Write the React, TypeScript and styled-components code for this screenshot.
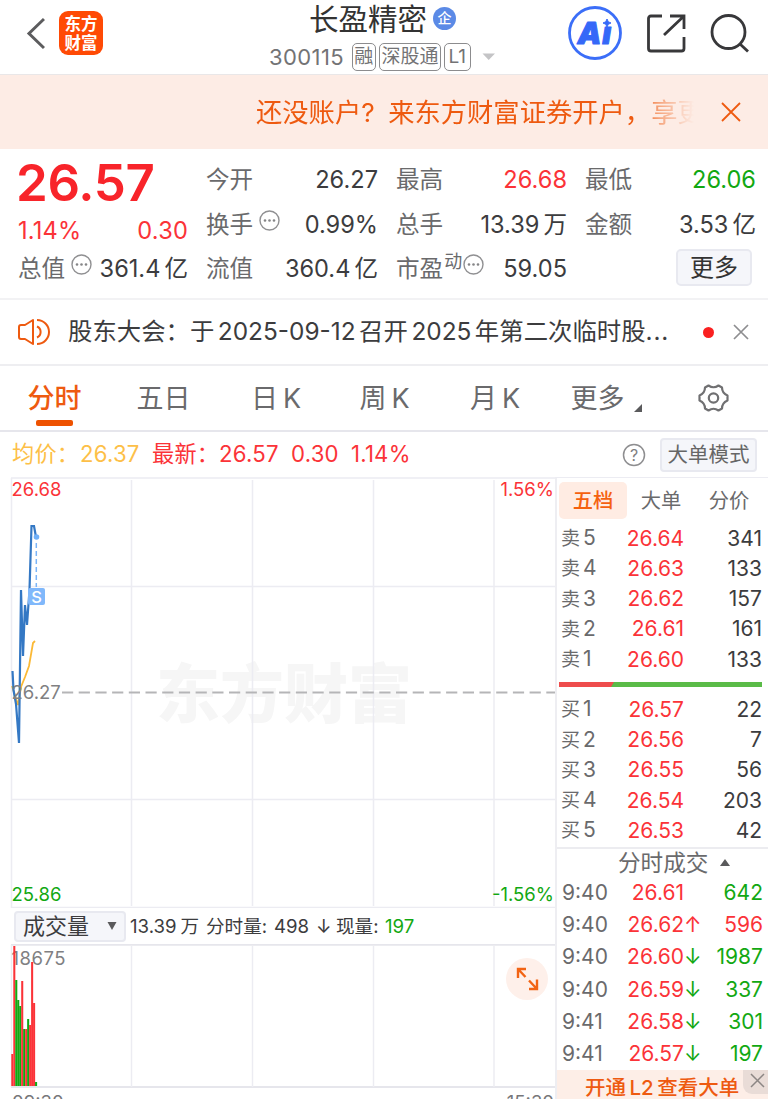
import React from 'react';
import styled, { createGlobalStyle, css } from 'styled-components';

const RED = '#fb3338';
const GREEN = '#12a812';
const ORANGE = '#ee5a10';
const LINE = '#ececf2';
const INK = '#3c3c3e';
const MUTED = '#6a6a6c';
const FONT = `Inter, 'Noto Sans CJK SC', sans-serif`;

const Global = createGlobalStyle`
  * { box-sizing: border-box; }
  html, body { margin: 0; padding: 0; background: #fff; }
  body { font-family: ${FONT}; color: ${INK}; line-height: 1.2; overflow: hidden; text-autospace: no-autospace; }
  svg { display: block; flex: none; }
`;

type Tone = 'red' | 'green' | 'ink';
const tones: Record<Tone, string> = { red: RED, green: GREEN, ink: INK };

const Screen = styled.div`
  width: 768px;
  height: 1099px;
  overflow: hidden;
  display: flex;
  flex-direction: column;
  white-space: nowrap;
  & > * { flex-shrink: 0; }
`;

const Thin = styled.span`
  margin: 0 0 0 4px;
`;

/* ---------- header ---------- */
const Header = styled.header`
  height: 75px;
  display: grid;
  grid-template-columns: 252px 264px 252px;
  border-bottom: 1px solid #e9e7e8;
`;
const HeaderLeft = styled.div`
  display: flex;
  padding: 11px 0 0 26px;
  gap: 14px;
`;
const Logo = styled.div`
  width: 44px;
  height: 44px;
  border-radius: 9px;
  background: #ff4a05;
  color: #fff;
  font-size: 16.5px;
  font-weight: 700;
  line-height: 18.5px;
  text-align: center;
  padding-top: 4px;
`;
const HeaderMid = styled.div`
  display: flex;
  flex-direction: column;
`;
const TitleRow = styled.div`
  display: flex;
  align-items: center;
  height: 38px;
  padding-left: 57px;
  gap: 6px;
  font-size: 29.5px;
  line-height: 36px;
  color: #333;
`;
const Verified = styled.span`
  width: 23px;
  height: 23px;
  margin-top: -2px;
  border-radius: 50%;
  background: #5b8ae6;
  color: #fff;
  font-size: 14px;
  line-height: 22px;
  font-weight: 500;
  text-align: center;
`;
const CodeRow = styled.div`
  display: flex;
  align-items: center;
  height: 38px;
  padding-left: 17px;
  color: #737375;
`;
const Code = styled.span`
  font-size: 22px;
  letter-spacing: 0.4px;
  width: 82.5px;
`;
const Badge = styled.span<{ $w: number }>`
  width: ${p => p.$w}px;
  height: 28px;
  margin-right: 3px;
  border: 1.5px solid #8c8c8e;
  border-radius: 5px;
  font-size: 19px;
  line-height: 26px;
  text-align: center;
`;
const HeaderRight = styled.div`
  display: flex;
  align-items: flex-start;
  padding: 6px 0 0 52px;
  gap: 24px;
`;
const TopIcon = styled.span`
  padding-top: 7px;
`;

/* ---------- promo ---------- */
const Promo = styled.div`
  height: 74px;
  background: #fdece5;
  display: flex;
  align-items: center;
  padding-left: 256px;
  color: ${ORANGE};
`;
const PromoText = styled.div`
  width: 440px;
  overflow: hidden;
  font-size: 26.3px;
  line-height: 40px;
  padding-top: 1px;
  mask-image: linear-gradient(90deg, #000 380px, rgba(0, 0, 0, 0.45) 405px, transparent 438px);
`;
const PromoClose = styled.div`
  padding-left: 25px;
`;
const Question = styled.span`
  display: inline-block;
  width: 27px;
`;

/* ---------- quote ---------- */
const Quote = styled.section`
  height: 151px;
  display: grid;
  grid-template-columns: 170px 172px 171px 171px;
  column-gap: 18px;
  padding-left: 18px;
  border-bottom: 2px solid #f2f2f4;
  font-size: 23.6px;
`;
const PriceCol = styled.div`
  display: flex;
  flex-direction: column;
`;
const Price = styled.div`
  height: 68px;
  line-height: 68px;
  margin-left: -2px;
  font-size: 51px;
  font-weight: 600;
  color: #f8242a;
  letter-spacing: -0.3px;
`;
const ChangeRow = styled.div`
  height: 29px;
  display: flex;
  justify-content: space-between;
  align-items: center;
  color: ${RED};
  letter-spacing: 0.2px;
`;
const StatCol = styled.div`
  padding-top: 9px;
`;
const Stat = styled.div<{ $h?: number }>`
  height: ${p => p.$h ?? 44.5}px;
  display: flex;
  align-items: center;
  color: ${MUTED};
`;
const Value = styled.span<{ $tone?: Tone }>`
  margin-left: auto;
  color: ${p => tones[p.$tone ?? 'ink']};
`;
const Sup = styled.span`
  font-size: 18px;
  margin: -14px 0 0 1px;
`;
const Hint = styled.span<{ $gap?: number }>`
  margin: -9px 0 0 ${p => p.$gap ?? 6}px;
`;
const MoreButton = styled.span`
  width: 76px;
  height: 37px;
  margin: -3px 4px 0 auto;
  border: 2px solid #e8e9f0;
  border-radius: 5px;
  background: #f5f6fa;
  color: #333;
  font-size: 24px;
  line-height: 33px;
  text-align: center;
`;

/* ---------- news ---------- */
const News = styled.div`
  height: 66px;
  display: flex;
  align-items: center;
  padding-left: 17px;
  border-bottom: 2px solid #eeeef1;
  font-size: 24.4px;
`;
const NewsText = styled.div`
  margin-left: 18px;
  width: 635px;
`;
const Digits = styled.span`
  margin: 0 3.5px;
`;
const Ellipsis = styled.span`
  letter-spacing: 0.8px;
`;
const Dot = styled.i`
  width: 11px;
  height: 11px;
  border-radius: 50%;
  background: #fa2020;
  margin-right: 19px;
`;

/* ---------- period tabs ---------- */
const Tabs = styled.nav`
  height: 66px;
  display: flex;
  border-bottom: 2px solid #e6e6ec;
  font-size: 27px;
  line-height: 65px;
  color: ${MUTED};
`;
const Tab = styled.div<{ $w: number; $active?: boolean }>`
  width: ${p => p.$w}px;
  display: flex;
  flex-direction: column;
  align-items: center;
  ${p =>
    p.$active &&
    css`
      color: ${ORANGE};
      font-weight: 500;
      &::after {
        content: '';
        width: 37px;
        height: 6px;
        border-radius: 2px;
        background: #ee5200;
        margin-top: -10px;
      }
    `}
`;
const TabInner = styled.span`
  height: 64px;
  display: flex;
  gap: 5px;
`;
const Corner = styled.span`
  padding-top: 38px;
  margin-left: 4px;
`;
const Gear = styled.span`
  padding: 17px 0 0 41px;
`;

/* ---------- legend ---------- */
const Legend = styled.div`
  height: 45px;
  display: flex;
  align-items: center;
  padding-left: 12px;
  font-size: 22.2px;
  color: ${RED};
`;
const LegendItem = styled.span<{ $w: number; $color?: string }>`
  width: ${p => p.$w}px;
  color: ${p => p.$color ?? RED};
  letter-spacing: 0.2px;
`;
const ModeButton = styled.span`
  width: 97px;
  height: 34px;
  margin-left: 14px;
  border: 2px solid #e8e9f0;
  border-radius: 4px;
  background: #f5f6fa;
  color: #666;
  font-size: 20.5px;
  line-height: 30px;
  text-align: center;
`;

/* ---------- main ---------- */
const Main = styled.main`
  height: 622px;
  display: grid;
  grid-template-columns: 555px 213px;
`;
const ChartCol = styled.div`
  display: flex;
  flex-direction: column;
`;
const VolumeBar = styled.div`
  height: 36px;
  display: flex;
  align-items: center;
  padding-left: 14px;
  font-size: 18.6px;
`;
const Select = styled.span`
  width: 112px;
  height: 31px;
  border: 2px solid #e8e9f0;
  border-radius: 4px;
  background: #f5f6fa;
  display: flex;
  align-items: center;
  justify-content: space-between;
  padding: 0 7px;
  margin-right: 4px;
  font-size: 22px;
  line-height: 28px;
`;
const VolumeText = styled.span<{ $w: number; $tone?: Tone }>`
  width: ${p => p.$w}px;
  color: ${p => tones[p.$tone ?? 'ink']};
`;

const Book = styled.aside`
  height: 622px;
  border-left: 2px solid #eeeef2;
  border-top: 1px solid ${LINE};
  display: flex;
  flex-direction: column;
  font-size: 21px;
  & > * { flex-shrink: 0; }
`;
const BookTabs = styled.div`
  display: flex;
  padding: 4px 0 0 2px;
  height: 45px;
`;
const BookTab = styled.span<{ $active?: boolean }>`
  width: 68px;
  height: 37px;
  border-radius: 5px;
  font-size: 20.3px;
  line-height: 37px;
  text-align: center;
  color: ${p => (p.$active ? '#f5610f' : MUTED)};
  background: ${p => (p.$active ? '#ffece3' : 'none')};
  font-weight: ${p => (p.$active ? 500 : 400)};
`;
const Level = styled.div`
  height: 30.25px;
  display: grid;
  grid-template-columns: 38px 85px 78px;
  align-items: center;
  padding-left: 4px;
  color: ${MUTED};
`;
const SideName = styled.span`
  font-size: 19px;
  margin-right: 3px;
`;
const Num = styled.span<{ $tone?: Tone }>`
  text-align: right;
  color: ${p => tones[p.$tone ?? 'ink']};
`;
const Ratio = styled.div`
  height: 20px;
  padding: 8px 0 0 2px;
`;
const TradesTitle = styled.div`
  margin-top: 1px;
  height: 30px;
  border-top: 2px solid #ececf0;
  display: flex;
  align-items: center;
  gap: 12px;
  padding-left: 61px;
  font-size: 22.6px;
  color: ${MUTED};
`;
const Trade = styled.div`
  height: 32.2px;
  display: grid;
  grid-template-columns: 47px 75px 17px 62px;
  align-items: center;
  padding-left: 5px;
  color: ${MUTED};
`;
const Arrow = styled.span<{ $tone: Tone }>`
  color: ${p => tones[p.$tone]};
`;
const Level2 = styled.div`
  height: 30px;
  display: flex;
  background: #fdeee7;
  color: ${ORANGE};
  font-size: 20.5px;
  font-weight: 500;
  line-height: 35px;
  padding-left: 28px;
`;
const Level2Text = styled.span`
  width: 158px;
`;
const Level2Close = styled.span`
  width: 25px;
  height: 24px;
  background: #e9dcd7;
  border-radius: 0 0 0 9px;
  padding: 3px 0 0 7px;
`;

const Cross = ({ size, color, w }: { size: number; color: string; w: number }) => (
  <svg width={size} height={size} viewBox={`0 0 ${size} ${size}`} stroke={color} strokeWidth={w}>
    <path d={`M1 1L${size - 1} ${size - 1}M${size - 1} 1L1 ${size - 1}`} />
  </svg>
);

const Dots = () => (
  <svg width="21" height="21" viewBox="0 0 21 21">
    <circle cx="10.5" cy="10.5" r="9.5" fill="none" stroke="#909092" strokeWidth="1.4" />
    {[6, 10.5, 15].map(x => (
      <circle key={x} cx={x} cy="10.5" r="1.3" fill="#858587" />
    ))}
  </svg>
);

const asks = [
  ['5', '26.64', '341'],
  ['4', '26.63', '133'],
  ['3', '26.62', '157'],
  ['2', '26.61', '161'],
  ['1', '26.60', '133'],
];
const bids = [
  ['1', '26.57', '22'],
  ['2', '26.56', '7'],
  ['3', '26.55', '56'],
  ['4', '26.54', '203'],
  ['5', '26.53', '42'],
];
const trades: [string, string, string, string, Tone][] = [
  ['9:40', '26.61', '', '642', 'green'],
  ['9:40', '26.62', '↑', '596', 'red'],
  ['9:40', '26.60', '↓', '1987', 'green'],
  ['9:40', '26.59', '↓', '337', 'green'],
  ['9:41', '26.58', '↓', '301', 'green'],
  ['9:41', '26.57', '↓', '197', 'green'],
];
const bars: [number, Tone][] = [
  [32, 'red'], [140, 'red'], [106, 'green'], [86, 'green'], [80, 'green'], [105, 'red'],
  [57, 'green'], [57, 'red'], [67, 'green'], [61, 'red'], [124, 'red'], [83, 'red'], [4, 'green'],
];
const gridX = [131.5, 252.5, 373.5, 494];

const PriceChart = () => (
  <svg width="555" height="431" viewBox="0 477 555 431" fontFamily={FONT} fontSize="18.5">
    <text x="156" y="717" fontSize="64" fontWeight="900" fill="#f6f6f6">东方财富</text>
    <g stroke={LINE} strokeWidth="1.5">
      <path d="M11 478H555M11 586.5H555M11 799.5H555M11.5 478V908M11 907.5H555" />
      {gridX.map(x => <path key={x} d={`M${x} 480V906`} />)}
    </g>
    <path d="M62 692.5H555" stroke="#b5b5b7" strokeWidth="1.8" strokeDasharray="11.2 5.5" />
    <path d="M12 686L18 705L21 687L25 677L29 666L33 643L35 641" fill="none" stroke="#fbb936" strokeWidth="1.8" />
    <path d="M12.5 671L13.5 690L16 704L19 743L21 590L23 656L25 605L27 625L29.5 590L31.5 526H34L36 537" fill="none" stroke="#3478c4" strokeWidth="2.2" />
    <path d="M36.3 543V587" stroke="#7bb5f8" strokeWidth="1.5" strokeDasharray="5 3" />
    <circle cx="36.5" cy="537" r="2.8" fill="#70b0f8" />
    <rect x="28" y="588" width="17" height="17" rx="2" fill="#80b8fb" />
    <text x="36.5" y="602.5" fontSize="16.5" fill="#fff" fontWeight="500" textAnchor="middle">S</text>
    <text x="11.5" y="496" fill={RED}>26.68</text>
    <text x="554" y="496" fill={RED} textAnchor="end">1.56%</text>
    <text x="11.5" y="699" fill="#808082">26.27</text>
    <text x="11.5" y="901" fill={GREEN}>25.86</text>
    <text x="554" y="901" fill={GREEN} textAnchor="end">-1.56%</text>
  </svg>
);

const VolumeChart = () => (
  <svg width="555" height="155" viewBox="0 944 555 155" fontFamily={FONT} fontSize="18.5">
    <path d="M11 944.8H555M11 1087H555" stroke="#e6e6ec" strokeWidth="1.8" />
    <path d="M11.5 945V1087" stroke={LINE} strokeWidth="1.5" />
    {gridX.map(x => <path key={x} d={`M${x} 946V1087`} stroke={LINE} strokeWidth="1.5" />)}
    <text x="11.5" y="965" fill="#808082" letterSpacing="0.5">18675</text>
    {bars.map(([h, t], i) => (
      <rect key={i} x={11.3 + i * 1.98} y={1086 - h} width="2.05" height={h} fill={tones[t]} />
    ))}
    <circle cx="527" cy="979" r="21" fill="#fef0ea" />
    <path d="M518 978V969H526M518 969L525.5 977M537 979.5V989H529M537 989L529 980.5" fill="none" stroke="#f26414" strokeWidth="2.4" />
    <text x="12" y="1108.5" fill="#77777a">09:30</text>
    <text x="554" y="1108.5" fill="#77777a" textAnchor="end">15:30</text>
  </svg>
);

const Levels = ({ side, rows }: { side: string; rows: string[][] }) => (
  <>
    {rows.map(([n, price, qty]) => (
      <Level key={n}>
        <span><SideName>{side}</SideName>{n}</span>
        <Num $tone="red">{price}</Num>
        <Num>{qty}</Num>
      </Level>
    ))}
  </>
);

export default function App() {
  return (
    <Screen>
      <Global />
      <Header>
        <HeaderLeft>
          <svg width="19" height="44" viewBox="0 0 19 44">
            <path d="M18 8L3 22.5L18 37" fill="none" stroke="#5c5c5e" strokeWidth="3" />
          </svg>
          <Logo>东方<br />财富</Logo>
        </HeaderLeft>
        <HeaderMid>
          <TitleRow>长盈精密<Verified>企</Verified></TitleRow>
          <CodeRow>
            <Code>300115</Code>
            <Badge $w={24.5}>融</Badge>
            <Badge $w={62}>深股通</Badge>
            <Badge $w={26.5}>L1</Badge>
            <svg width="32" height="8" viewBox="0 0 32 8"><path d="M8.5 0.5H21L14.7 7Z" fill="#c4c4c6" /></svg>
          </CodeRow>
        </HeaderMid>
        <HeaderRight>
          <svg width="54" height="54" viewBox="0 0 54 54">
            <circle cx="27" cy="27" r="25.5" fill="#fff" stroke="#3b6ef8" strokeWidth="2.8" />
            <text
              x="9.5" y="37.5" fontSize="30" fontFamily="Inter, sans-serif" fontWeight="900" fontStyle="italic"
              fill="#3568f8" stroke="#3568f8" strokeWidth="1" strokeLinejoin="round" letterSpacing="0.8"
            >
              Aı
            </text>
            <path d="M39 13Q39.5 16.500 43 17Q39.5 17.500 39 21Q38.500 17.500 35 17Q38.500 16.500 39 13Z" fill="#3568f8" stroke="#3568f8" />
          </svg>
          <TopIcon>
            <svg width="40" height="40" viewBox="0 0 40 40" fill="none" stroke="#38383a" strokeWidth="2.8">
              <path d="M16 3H5Q2.5 3 2.5 5.500V35.500Q2.5 38 5 38H35.500Q38 38 38 35.500V24M24 3H38V16M38 3L18 22" />
            </svg>
          </TopIcon>
          <TopIcon>
            <svg width="40" height="40" viewBox="0 0 40 40" fill="none" stroke="#38383a" strokeWidth="2.8">
              <circle cx="18.5" cy="19" r="16.5" />
              <path d="M30 31L38 38.500" />
            </svg>
          </TopIcon>
        </HeaderRight>
      </Header>

      <Promo>
        <PromoText>还没账户<Question>?</Question>来东方财富证券开户，享更</PromoText>
        <PromoClose><Cross size={20} color={ORANGE} w={1.8} /></PromoClose>
      </Promo>

      <Quote>
        <PriceCol>
          <Price>26.57</Price>
          <ChangeRow><span>1.14%</span><span>0.30</span></ChangeRow>
          <Stat $h={46}>总值<Hint><Dots /></Hint><Value>361.4<Thin>亿</Thin></Value></Stat>
        </PriceCol>
        <StatCol>
          <Stat>今开<Value>26.27</Value></Stat>
          <Stat>换手<Hint><Dots /></Hint><Value>0.99%</Value></Stat>
          <Stat>流值<Value>360.4<Thin>亿</Thin></Value></Stat>
        </StatCol>
        <StatCol>
          <Stat>最高<Value $tone="red">26.68</Value></Stat>
          <Stat>总手<Value>13.39<Thin>万</Thin></Value></Stat>
          <Stat>市盈<Sup>动</Sup><Hint $gap={1}><Dots /></Hint><Value>59.05</Value></Stat>
        </StatCol>
        <StatCol>
          <Stat>最低<Value $tone="green">26.06</Value></Stat>
          <Stat>金额<Value>3.53<Thin>亿</Thin></Value></Stat>
          <Stat><MoreButton>更多</MoreButton></Stat>
        </StatCol>
      </Quote>

      <News>
        <svg width="33" height="28" viewBox="0 0 33 28" fill="none" stroke={ORANGE} strokeWidth="2">
          <path d="M16 2L8 7H4Q2 7 2 9V19Q2 21 4 21H8L16 26Z" strokeLinejoin="round" />
          <path d="M20 8.500A6 6 0 0 1 20 19.500M20 2A12 12 0 0 1 20 26" />
        </svg>
        <NewsText>股东大会：于<Digits>2025-09-12</Digits>召开<Digits>2025</Digits>年第二次临时股<Ellipsis>...</Ellipsis></NewsText>
        <Dot />
        <Cross size={16} color="#8e8e90" w={1.7} />
      </News>

      <Tabs>
        <Tab $w={109} $active><TabInner>分时</TabInner></Tab>
        <Tab $w={109}><TabInner>五日</TabInner></Tab>
        <Tab $w={116}><TabInner>日<span>K</span></TabInner></Tab>
        <Tab $w={101}><TabInner>周<span>K</span></TabInner></Tab>
        <Tab $w={120}><TabInner>月<span>K</span></TabInner></Tab>
        <Tab $w={102}>
          <TabInner>更多<Corner><svg width="8" height="8" viewBox="0 0 8 8"><path d="M8 0V8H0Z" fill="#5a5a5c" /></svg></Corner></TabInner>
        </Tab>
        <Gear>
          <svg width="31" height="30" viewBox="0 0 31 30" fill="none" stroke="#707072" strokeWidth="2.2" strokeLinejoin="round">
            <path d="M10.5 2.5Q15.5 6 20.5 2.5L24 4.5Q24 10 29.5 12.5V17.5Q24 20 24 25.5L20.5 27.5Q15.5 24 10.5 27.5L7 25.5Q7 20 1.5 17.5V12.5Q7 10 7 4.5Z" />
            <circle cx="15.5" cy="15" r="4.7" />
          </svg>
        </Gear>
      </Tabs>

      <Legend>
        <LegendItem $w={68} $color="#fdbf48">均价：</LegendItem>
        <LegendItem $w={72} $color="#fdbf48">26.37</LegendItem>
        <LegendItem $w={67}>最新：</LegendItem>
        <LegendItem $w={72}>26.57</LegendItem>
        <LegendItem $w={60}>0.30</LegendItem>
        <LegendItem $w={271}>1.14%</LegendItem>
        <svg width="24" height="24" viewBox="0 0 24 24">
          <circle cx="12" cy="12" r="10.5" fill="none" stroke="#8e8e90" strokeWidth="1.5" />
          <text x="12" y="17.5" fontSize="16" fontFamily={FONT} fill="#808082" textAnchor="middle">?</text>
        </svg>
        <ModeButton>大单模式</ModeButton>
      </Legend>

      <Main>
        <ChartCol>
          <PriceChart />
          <VolumeBar>
            <Select>成交量<svg width="10" height="8" viewBox="0 0 10 8"><path d="M0.5 0H9.5L5 8Z" fill="#5a5a5c" /></svg></Select>
            <VolumeText $w={76}>13.39<Thin>万</Thin></VolumeText>
            <VolumeText $w={68}>分时量:</VolumeText>
            <VolumeText $w={42}>498</VolumeText>
            <VolumeText $w={20}>↓</VolumeText>
            <VolumeText $w={49}>现量:</VolumeText>
            <VolumeText $w={40} $tone="green">197</VolumeText>
          </VolumeBar>
          <VolumeChart />
        </ChartCol>
        <Book>
          <BookTabs>
            <BookTab $active>五档</BookTab>
            <BookTab>大单</BookTab>
            <BookTab>分价</BookTab>
          </BookTabs>
          <Levels side="卖" rows={asks} />
          <Ratio>
            <svg width="203" height="5" viewBox="0 0 203 5">
              <rect width="203" height="5" fill="#5abb48" />
              <path d="M0 0H55L52 5H0Z" fill="#ee4c4c" />
            </svg>
          </Ratio>
          <Levels side="买" rows={bids} />
          <TradesTitle>
            分时成交
            <svg width="10" height="7" viewBox="0 0 10 7"><path d="M0 7L5 0L10 7Z" fill="#5a5a5c" /></svg>
          </TradesTitle>
          {trades.map(([time, price, arrow, qty, tone], i) => (
            <Trade key={i}>
              <span>{time}</span>
              <Num $tone="red">{price}</Num>
              <Arrow $tone={tone}>{arrow}</Arrow>
              <Num $tone={tone}>{qty}</Num>
            </Trade>
          ))}
          <Level2>
            <Level2Text>开通<Digits>L2</Digits>查看大单</Level2Text>
            <Level2Close><Cross size={15} color="#8c8684" w={1.5} /></Level2Close>
          </Level2>
        </Book>
      </Main>
    </Screen>
  );
}
